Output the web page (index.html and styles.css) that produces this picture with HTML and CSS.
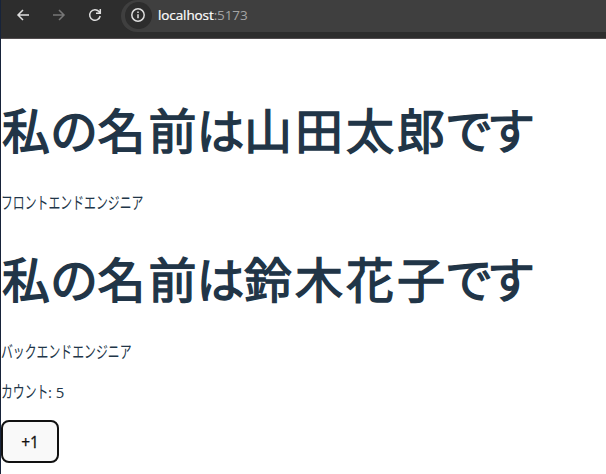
FILE: index.html
```html
<!DOCTYPE html>
<html lang="ja">
<head>
<meta charset="utf-8">
<title>localhost:5173</title>
<link rel="stylesheet" href="styles.css">
</head>
<body>
<header class="toolbar">
  <svg class="icon" viewBox="0 0 16 16"><path d="M14 8H3M8 3 3 8l5 5"/></svg>
  <svg class="icon disabled" viewBox="0 0 16 16"><path d="M2 8h11M8 3l5 5-5 5"/></svg>
  <svg class="icon" viewBox="0 0 16 16"><path d="M13.2 9A5.3 5.3 0 1 1 12 4.5L13.3 6M13.3 2v4.3H9"/></svg>
  <div class="address">
    <span class="info"><svg class="icon" viewBox="0 0 16 16"><circle cx="8" cy="8" r="6.2"/><path d="M8 7.3v4M8 4.5v1.5"/></svg></span>
    <span class="url"><span class="host">localhost</span><span class="port">:5173</span></span>
  </div>
</header>
<main class="page">
  <h1>私<span class="kana">の</span>名前<span class="kana">は</span>山田太郎<span class="kana">です</span></h1>
  <p><span class="narrow">フロントエンドエンジニア</span></p>
  <h1>私<span class="kana">の</span>名前<span class="kana">は</span>鈴木花子<span class="kana">です</span></h1>
  <p><span class="narrow">バックエンドエンジニア</span></p>
  <p class="count"><span class="narrow label">カウント</span><span>: 5</span></p>
  <button>+1</button>
</main>
</body>
</html>
```
FILE: styles.css
```css
* { box-sizing: border-box; }
body {
  margin: 0;
  height: 474px;
  overflow: hidden;
  background: #fff;
  border-left: 1px solid #17233a;
  color: #213547;
  font: 15px/24px "Open Sans", "Noto Sans CJK JP", sans-serif;
}
.toolbar {
  display: flex;
  align-items: flex-start;
  height: 39px;
  padding-left: 14px;
  background: #2d2d2d;
  border-bottom: 1px solid #514c4e;
}
.icon {
  flex: none;
  width: 16px;
  height: 16px;
  margin: 7px 20px 0 0;
  fill: none;
  stroke: #dedede;
  stroke-width: 1.5;
}
.disabled { stroke: #777; }
.address {
  display: flex;
  flex: 1;
  height: 32px;
  margin-left: -2px;
  background: #3f3f3f;
  border-radius: 16px 0 0 16px;
}
.info {
  width: 27px;
  height: 27px;
  margin: 2px 0 0 4px;
  padding: 5px;
  background: #2d2d2d;
  border-radius: 50%;
}
.info .icon { display: block; margin: 0; }
.url {
  margin: 5px 0 0 6px;
  color: #a4a4a4;
  font-size: 13.5px;
  line-height: 20px;
  letter-spacing: -.1px;
}
.host {
  color: #fff;
  -webkit-text-stroke: .2px #fff;
}
.page { padding-top: 57px; }
h1 {
  margin: 0;
  padding-left: 1px;
  font: 400 48px/64px "Noto Sans CJK JP", sans-serif;
  letter-spacing: 3px;
  white-space: nowrap;
  -webkit-text-stroke: 1.4px #213547;
}
.kana {
  margin: 0 5.5px 0 -3px;
  letter-spacing: -6px;
}
p { margin: 31px 0 30px; }
.narrow {
  display: inline-block;
  font-size: 17px;
  transform: scaleX(.698);
  transform-origin: left;
}
.count { margin-top: -14px; }
.label { margin-right: -21px; }
button {
  display: block;
  width: 58px;
  height: 43px;
  margin: -14px 0 0;
  padding: 0;
  border: 2px solid #111;
  border-radius: 8px;
  background: #f9f9f9;
  color: #111;
  font: 500 15.5px "Open Sans", sans-serif;
  -webkit-text-stroke: .3px #111;
}
```
